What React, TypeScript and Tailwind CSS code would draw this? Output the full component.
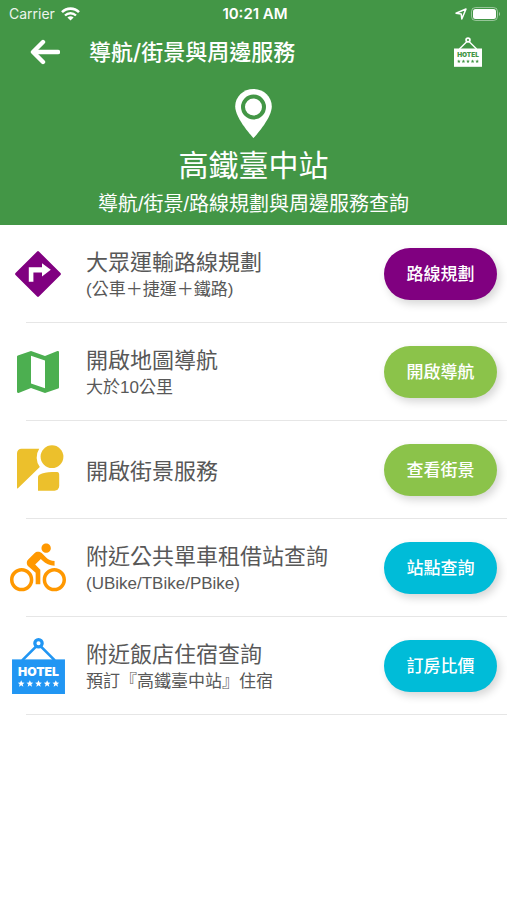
import type { ReactNode } from "react";
import { MdDirectionsBike, MdMap } from "react-icons/md";

const STAR_X = [9, 17.5, 26, 34.5, 43];

function HotelSign({ className, letters }: { className: string; letters: string }) {
  return (
    <svg viewBox="0 0 52 55" className={className} fill="currentColor" aria-hidden="true">
      <path d="M10 22 L26 6 L42 22" fill="none" stroke="currentColor" strokeWidth="2.6" />
      <circle cx="26" cy="5.2" r="3.6" fill={letters} stroke="currentColor" strokeWidth="3.2" />
      <rect x="0" y="21" width="52" height="34" />
      <text
        x="26"
        y="37"
        textAnchor="middle"
        fontFamily="Inter, 'Liberation Sans', sans-serif"
        fontSize="12"
        fontWeight="900"
        fill={letters}
      >
        HOTEL
      </text>
      {STAR_X.map((x) => (
        <path
          key={x}
          transform={`translate(${x} 45)`}
          fill={letters}
          d="M0 -3.4 L1 -1.2 L3.3 -1.1 L1.5 0.4 L2.1 2.8 L0 1.5 L-2.1 2.8 L-1.5 0.4 L-3.3 -1.1 L-1 -1.2 Z"
        />
      ))}
    </svg>
  );
}

function TurnSign() {
  return (
    <svg viewBox="0 0 56 56" className="size-14" aria-hidden="true">
      <path
        d="M28 6.4 L49.6 28 L28 49.6 L6.4 28 Z"
        fill="currentColor"
        stroke="currentColor"
        strokeWidth="2.5"
        strokeLinejoin="round"
      />
      <path d="M18.8 35.8 V21.2 H32 V17.2 L40.8 23.8 L32 30.6 V26.6 H23.4 V35.8 Z" fill="white" />
    </svg>
  );
}

function StreetView() {
  return (
    <svg viewBox="0 -1.5 56 56" className="size-14" fill="currentColor" aria-hidden="true">
      <circle cx="42" cy="13.2" r="11.4" />
      <path d="M29.2 5.2 H11.5 A4.6 4.6 0 0 0 7 9.8 V44 Q7 45.6 8.2 44.4 L29.8 23.4 A16 16 0 0 1 29.2 5.2 Z" />
      <path d="M28 33.6 Q28 32 29.4 31.2 Q34.5 28.6 42 28.6 H47.4 Q49.2 28.9 49.2 31 V42.6 A4.6 4.6 0 0 1 44.6 47.2 H28 Z" />
    </svg>
  );
}

function StatusBar() {
  return (
    <div className="grid h-7 grid-cols-3 items-center pl-[9px] pr-[6px] text-[14px] leading-5">
      <div className="flex items-center gap-[6px]">
        <span className="opacity-90">Carrier</span>
        <svg viewBox="0 0 19 14" className="h-[14px] w-[19px]" fill="none" stroke="currentColor" aria-hidden="true">
          <path d="M1 5.2 A12 12 0 0 1 18 5.2" strokeWidth="2.6" />
          <path d="M4 8.5 A8 8 0 0 1 15 8.5" strokeWidth="2.4" />
          <path d="M9.5 13.6 L6.4 10.6 A4.6 4.6 0 0 1 12.6 10.6 Z" fill="currentColor" stroke="none" />
        </svg>
      </div>
      <span className="text-center text-[15px] font-semibold">10:21 AM</span>
      <div className="flex items-center justify-end gap-[4px]">
        <svg viewBox="0 0 12 12" className="size-3" fill="none" stroke="currentColor" aria-hidden="true">
          <path d="M1 5.2 L11 1 L6.8 11 L6.2 5.9 Z" strokeWidth="1.5" strokeLinejoin="round" />
        </svg>
        <svg viewBox="0 0 30 14" className="h-[14px] w-[30px]" aria-hidden="true">
          <rect x="0.5" y="0.5" width="26" height="13" rx="4" fill="none" stroke="white" strokeOpacity="0.45" />
          <rect x="2" y="2" width="23" height="10" rx="2.5" fill="white" />
          <path d="M28 5 A2.4 2.4 0 0 1 28 9 Z" fill="white" fillOpacity="0.5" />
        </svg>
      </div>
    </div>
  );
}

type Service = {
  title: string;
  note?: string;
  action: string;
  actionColor: string;
  iconColor: string;
  icon: ReactNode;
};

const SERVICES: Service[] = [
  {
    title: "大眾運輸路線規劃",
    note: "(公車＋捷運＋鐵路)",
    action: "路線規劃",
    actionColor: "bg-[#800080]",
    iconColor: "text-[#800080]",
    icon: <TurnSign />,
  },
  {
    title: "開啟地圖導航",
    note: "大於10公里",
    action: "開啟導航",
    actionColor: "bg-[#8bc34a]",
    iconColor: "text-[#4caf50]",
    icon: <MdMap className="size-14" />,
  },
  {
    title: "開啟街景服務",
    action: "查看街景",
    actionColor: "bg-[#8bc34a]",
    iconColor: "text-[#ecc02c]",
    icon: <StreetView />,
  },
  {
    title: "附近公共單車租借站查詢",
    note: "(UBike/TBike/PBike)",
    action: "站點查詢",
    actionColor: "bg-[#00bcd8]",
    iconColor: "text-[#ff9800]",
    icon: <MdDirectionsBike className="size-14" />,
  },
  {
    title: "附近飯店住宿查詢",
    note: "預訂『高鐵臺中站』住宿",
    action: "訂房比價",
    actionColor: "bg-[#00bcd8]",
    iconColor: "text-[#2196f3]",
    icon: <HotelSign className="h-14 w-[53px]" letters="white" />,
  },
];

function ServiceRow({ service }: { service: Service }) {
  return (
    <li>
      <div className="flex h-[97px] items-center pr-[10px] pt-px">
        <div className={`flex w-[76px] shrink-0 justify-center ${service.iconColor}`}>{service.icon}</div>
        <div className="min-w-0 flex-1 pl-[10px] pt-[2px] text-[#585858]">
          <h2 className="text-[22px] leading-[30px]">{service.title}</h2>
          {service.note && (
            <p className="font-['Liberation_Sans','Noto_Sans_CJK_TC',sans-serif] text-[17px] leading-[26px]">
              {service.note}
            </p>
          )}
        </div>
        <button
          type="button"
          className={`h-[52px] w-[113px] shrink-0 rounded-full pt-[2px] text-[17px] font-medium text-white shadow-[3px_4px_8px_rgba(0,0,0,0.16)] ${service.actionColor}`}
        >
          {service.action}
        </button>
      </div>
      <hr className="ml-[26px] border-[#e6e6e6]" />
    </li>
  );
}

export default function App() {
  return (
    <div className="min-h-screen bg-white font-[Inter,'Noto_Sans_CJK_TC',sans-serif]">
      <header className="bg-[#439646] pb-[6px] text-white">
        <StatusBar />
        <nav className="flex h-12 items-center pl-[30px] pr-[25px]">
          <button type="button" aria-label="返回">
            <svg viewBox="0 0 30 26" className="h-[26px] w-[30px]" fill="none" stroke="currentColor" strokeWidth="4.4" aria-hidden="true">
              <path d="M13 3 L3 13 L13 23" strokeLinecap="round" strokeLinejoin="round" />
              <path d="M4 13 H28" strokeLinecap="round" />
            </svg>
          </button>
          <h1 className="flex-1 pl-[29px] text-[22px] font-medium leading-8">導航/街景與周邊服務</h1>
          <button type="button" aria-label="飯店">
            <HotelSign className="h-[30px] w-[28px]" letters="#439646" />
          </button>
        </nav>
        <div className="flex flex-col items-center pt-[13px] text-center">
          <svg viewBox="0 0 37 49" className="h-[49px] w-[37px]" aria-hidden="true">
            <path
              fill="white"
              d="M18.5 0 C8.3 0 0.2 7.7 0.2 17.4 C0.2 29.5 18.5 49 18.5 49 C18.5 49 36.8 29.5 36.8 17.4 C36.8 7.7 28.7 0 18.5 0 Z"
            />
            <circle cx="18.5" cy="18" r="10.5" fill="none" stroke="#439646" strokeWidth="4" />
          </svg>
          <p className="mt-1 text-[30px] leading-[46px]">高鐵臺中站</p>
          <p className="mt-px font-['Liberation_Sans','Noto_Sans_CJK_TC',sans-serif] text-[20px] leading-[30px]">
            導航/街景/路線規劃與周邊服務查詢
          </p>
        </div>
      </header>
      <main>
        <ul>
          {SERVICES.map((service) => (
            <ServiceRow key={service.title} service={service} />
          ))}
        </ul>
      </main>
    </div>
  );
}
